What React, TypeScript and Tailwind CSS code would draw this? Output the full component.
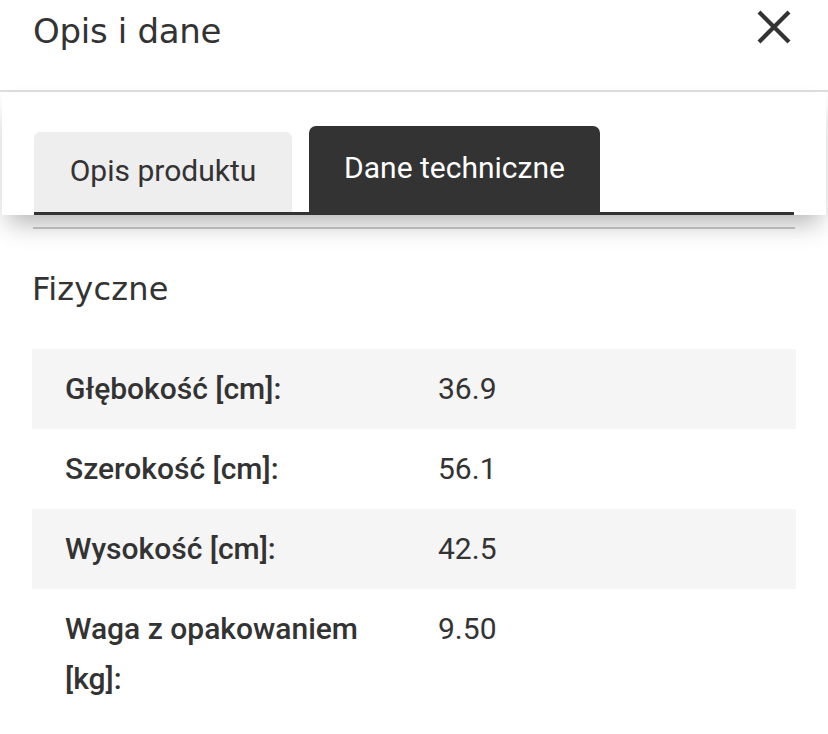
const rows = [
  { label: 'Głębokość [cm]:', value: '36.9' },
  { label: 'Szerokość [cm]:', value: '56.1' },
  { label: 'Wysokość [cm]:', value: '42.5' },
  { label: 'Waga z opakowaniem [kg]:', value: '9.50' },
];

export default function App() {
  return (
    <div className="w-[828px] h-[734px] overflow-hidden bg-white text-[#333]">
      <div className="h-[92px] flex items-start justify-between pl-[33px] pr-[36px] border-b-2 border-[#dedede]">
        <h1 className="mt-[11px] text-[34px] leading-[40px] font-['DejaVu_Sans',sans-serif] tracking-[-0.3px]">Opis i dane</h1>
        <svg width="36" height="36" viewBox="0 0 36 36" className="mt-[9px]">
          <path d="M3 3 L33 33 M33 3 L3 33" stroke="#333" strokeWidth="4.2" strokeLinecap="butt" />
        </svg>
      </div>

      <div className="relative z-10 mx-[2px] bg-white pt-[34px] px-[32px] shadow-[0_14px_24px_-6px_rgba(0,0,0,0.3)]">
        <div className="flex items-end gap-[17px] border-b-[3px] border-[#333] font-['Roboto',sans-serif]">
          <div className="w-[258px] h-[80px] bg-[#eeeeee] rounded-t-[6px] flex items-center justify-center text-[30px] pb-[4px]">
            Opis produktu
          </div>
          <div className="w-[291px] h-[86px] bg-[#333333] text-white rounded-t-[7px] flex items-center justify-center text-[30px] pb-[4px]">
            Dane techniczne
          </div>
        </div>
      </div>

      <div className="mx-[33px] mt-[12px] border-t-2 border-[#cccccc]" />

      <div className="px-[32px] font-['Roboto',sans-serif]">
        <h2 className="mt-[42px] text-[32px] leading-[36px] font-['DejaVu_Sans',sans-serif] tracking-[0.2px]">Fizyczne</h2>
        <div className="mt-[42px]">
          {rows.map((r, i) => (
            <div key={r.label} className={`grid grid-cols-[374px_1fr] text-[30px] leading-[50px] py-[15px] ${i % 2 === 0 ? 'bg-[#f5f5f5]' : 'bg-white'}`}>
              <div className="pl-[33px] pr-[40px] font-medium">{r.label}</div>
              <div className="pl-[32px]">{r.value}</div>
            </div>
          ))}
        </div>
      </div>
    </div>
  );
}
